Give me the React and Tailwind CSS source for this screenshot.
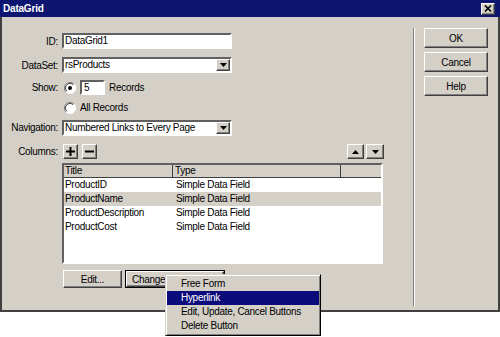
import React from 'react';

const raised =
  'bg-[#d4d0c8] border border-t-white border-l-white border-r-[#404040] border-b-[#404040] shadow-[inset_-1px_-1px_0_#808080]';
const sunken =
  'border-2 border-t-[#606060] border-l-[#606060] border-r-white border-b-white';

const DownArrow = () => (
  <svg width="7" height="4" viewBox="0 0 7 4">
    <path d="M0 0h7L3.5 4z" fill="#000" />
  </svg>
);

const UpArrow = () => (
  <svg width="7" height="4" viewBox="0 0 7 4">
    <path d="M0 4h7L3.5 0z" fill="#000" />
  </svg>
);

const Radio = ({ checked }) => (
  <svg width="12" height="12" viewBox="0 0 12 12">
    <circle cx="6" cy="6" r="5.5" fill="#fff" />
    <path d="M10 2A5.5 5.5 0 0 0 2 10" fill="none" stroke="#808080" strokeWidth="1" />
    <path d="M9.2 2.8A4.5 4.5 0 0 0 2.8 9.2" fill="none" stroke="#404040" strokeWidth="1" />
    <path d="M2 10A5.5 5.5 0 0 0 10 2" fill="none" stroke="#ffffff" strokeWidth="1" />
    {checked && <circle cx="6" cy="6" r="2" fill="#000" />}
  </svg>
);

const Select = ({ value, width }) => (
  <div className={`${sunken} bg-white flex items-center h-[16px]`} style={{ width }}>
    <span className="flex-1 pl-[1px] leading-none">{value}</span>
    <div className={`${raised} w-[14px] h-full flex items-center justify-center`}>
      <DownArrow />
    </div>
  </div>
);

const Label = ({ children }) => (
  <div className="w-[56px] text-right shrink-0">{children}</div>
);

const rows = [
  { title: 'ProductID', type: 'Simple Data Field' },
  { title: 'ProductName', type: 'Simple Data Field', selected: true },
  { title: 'ProductDescription', type: 'Simple Data Field' },
  { title: 'ProductCost', type: 'Simple Data Field' },
];

const menuItems = ['Free Form', 'Hyperlink', 'Edit, Update, Cancel Buttons', 'Delete Button'];

export default function App() {
  return (
    <div className="relative w-[500px] h-[337px] bg-white overflow-hidden text-[10px] tracking-[-0.3px] text-black font-['Liberation_Sans',Arial,sans-serif]">
      {/* Dialog */}
      <div className="w-[500px] h-[312px] flex flex-col bg-[#d4d0c8]">
        {/* Title bar */}
        <div className="h-[17px] bg-[#0c1670] flex items-center justify-between pl-[3px] pr-[5px]">
          <span className="text-white font-bold text-[10px] tracking-[-0.2px]">DataGrid</span>
          <div className={`${raised} w-[14px] h-[12px] flex items-center justify-center`}>
            <svg width="8" height="7" viewBox="0 0 8 7">
              <path d="M1 0.5l6 6M7 0.5l-6 6" stroke="#000" strokeWidth="1.6" />
            </svg>
          </div>
        </div>

        {/* Body */}
        <div className="flex-1 flex border-l-2 border-r-2 border-b-2 border-[#404040]">
          {/* Left form */}
          <div className="w-[411px] flex flex-col pt-[16px]">
            <div className="flex items-center h-[16px] gap-[4px]">
              <Label>ID:</Label>
              <div className={`${sunken} bg-white w-[170px] h-[16px] flex items-center pl-[1px] leading-none`}>
                DataGrid1
              </div>
            </div>

            <div className="flex items-center h-[16px] gap-[4px] mt-[8px]">
              <Label>DataSet:</Label>
              <Select value="rsProducts" width={170} />
            </div>

            <div className="flex items-center h-[15px] mt-[7px]">
              <Label>Show:</Label>
              <div className="ml-[6px] flex items-center">
                <Radio checked />
              </div>
              <div className={`${sunken} bg-white w-[25px] h-[15px] ml-[4px] flex items-center pl-[2px] leading-none`}>
                5
              </div>
              <span className="ml-[4px]">Records</span>
            </div>

            <div className="flex items-center h-[13px] mt-[6px]">
              <div className="w-[56px] shrink-0" />
              <div className="ml-[6px] flex items-center">
                <Radio />
              </div>
              <span className="ml-[4px]">All Records</span>
            </div>

            <div className="flex items-center h-[17px] gap-[4px] mt-[5px]">
              <Label>Navigation:</Label>
              <Select value="Numbered Links to Every Page" width={170} />
            </div>

            <div className="flex items-center h-[15px] mt-[8px]">
              <Label>Columns:</Label>
              <div className="flex-1 flex items-center justify-between ml-[5px] pr-[29px]">
                <div className="flex gap-[4px]">
                  <div className={`${raised} w-[15px] h-[15px] flex items-center justify-center`}>
                    <svg width="9" height="9" viewBox="0 0 9 9">
                      <path d="M3.5 0h2v9h-2zM0 3.5h9v2H0z" fill="#000" />
                    </svg>
                  </div>
                  <div className={`${raised} w-[15px] h-[15px] flex items-center justify-center`}>
                    <svg width="9" height="9" viewBox="0 0 9 9">
                      <path d="M0 3.5h9v2H0z" fill="#000" />
                    </svg>
                  </div>
                </div>
                <div className="flex gap-[2px]">
                  <div className={`${raised} w-[17px] h-[15px] flex items-center justify-center`}>
                    <UpArrow />
                  </div>
                  <div className={`${raised} w-[18px] h-[15px] flex items-center justify-center`}>
                    <DownArrow />
                  </div>
                </div>
              </div>
            </div>

            {/* Table */}
            <div className="flex mt-[4px]">
              <div className="w-[60px] shrink-0" />
              <div className={`${sunken} bg-white w-[321px] h-[101px] flex flex-col`}>
                <div className="h-[13px] flex bg-[#d4d0c8] border-b border-[#404040] leading-none">
                  <div className="w-[109px] border-r border-[#404040] pl-[1px] flex items-center">Title</div>
                  <div className="w-[168px] border-r border-[#404040] pl-[2px] flex items-center">Type</div>
                  <div className="flex-1" />
                </div>
                {rows.map(r => (
                  <div
                    key={r.title}
                    className={`h-[14px] flex items-center leading-none ${r.selected ? 'bg-[#d4d0c8]' : ''}`}
                  >
                    <div className="w-[110px] pl-[1px]">{r.title}</div>
                    <div className="pl-[2px]">{r.type}</div>
                  </div>
                ))}
              </div>
            </div>

            {/* Bottom buttons */}
            <div className="flex mt-[6px]">
              <div className="w-[61px] shrink-0" />
              <div className={`${raised} w-[59px] h-[18px] flex items-center justify-center`}>Edit...</div>
              <div className="ml-[3px] w-[100px] h-[18px] border border-black">
                <div className={`${raised} w-full h-full flex items-center pl-[5px] whitespace-nowrap`}>
                  Change
                </div>
              </div>
            </div>
          </div>

          {/* Separator */}
          <div className="mt-[11px] mb-[4px] w-[2px] border-l border-[#808080] border-r border-r-white" />

          {/* Right buttons */}
          <div className="flex-1 flex flex-col gap-[4px] pt-[11px] pl-[9px]">
            {['OK', 'Cancel', 'Help'].map(b => (
              <div key={b} className={`${raised} w-[64px] h-[20px] flex items-center justify-center`}>
                {b}
              </div>
            ))}
          </div>
        </div>
      </div>

      {/* Context menu */}
      <div className="absolute left-[165px] top-[274px] w-[156px] h-[62px] bg-[#d4d0c8] border border-t-[#d4d0c8] border-l-[#d4d0c8] border-r-black border-b-black shadow-[inset_1px_1px_0_#fff,inset_-1px_-1px_0_#808080] py-[2px] px-[1px]">
        {menuItems.map(item => (
          <div
            key={item}
            className={`h-[14px] flex items-center pl-[14px] leading-none ${
              item === 'Hyperlink' ? 'bg-[#0b0b7c] text-white' : ''
            }`}
          >
            {item}
          </div>
        ))}
      </div>
    </div>
  );
}
